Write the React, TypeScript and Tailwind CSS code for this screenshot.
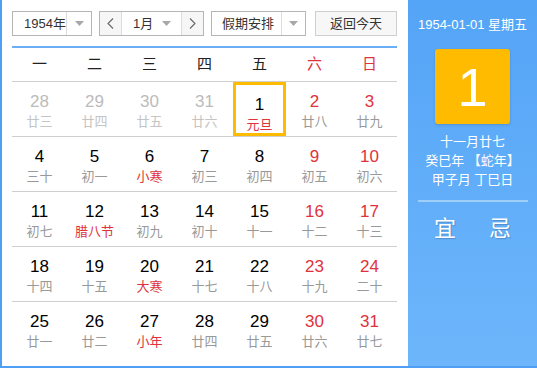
import React from "react";

type Cell = { d: number; l: string; kind: "prev" | "normal" | "weekend"; lr?: boolean; sel?: boolean };

const rows: Cell[][] = [
  [
    { d: 28, l: "廿三", kind: "prev" },
    { d: 29, l: "廿四", kind: "prev" },
    { d: 30, l: "廿五", kind: "prev" },
    { d: 31, l: "廿六", kind: "prev" },
    { d: 1, l: "元旦", kind: "normal", lr: true, sel: true },
    { d: 2, l: "廿八", kind: "weekend" },
    { d: 3, l: "廿九", kind: "weekend" },
  ],
  [
    { d: 4, l: "三十", kind: "normal" },
    { d: 5, l: "初一", kind: "normal" },
    { d: 6, l: "小寒", kind: "normal", lr: true },
    { d: 7, l: "初三", kind: "normal" },
    { d: 8, l: "初四", kind: "normal" },
    { d: 9, l: "初五", kind: "weekend" },
    { d: 10, l: "初六", kind: "weekend" },
  ],
  [
    { d: 11, l: "初七", kind: "normal" },
    { d: 12, l: "腊八节", kind: "normal", lr: true },
    { d: 13, l: "初九", kind: "normal" },
    { d: 14, l: "初十", kind: "normal" },
    { d: 15, l: "十一", kind: "normal" },
    { d: 16, l: "十二", kind: "weekend" },
    { d: 17, l: "十三", kind: "weekend" },
  ],
  [
    { d: 18, l: "十四", kind: "normal" },
    { d: 19, l: "十五", kind: "normal" },
    { d: 20, l: "大寒", kind: "normal", lr: true },
    { d: 21, l: "十七", kind: "normal" },
    { d: 22, l: "十八", kind: "normal" },
    { d: 23, l: "十九", kind: "weekend" },
    { d: 24, l: "二十", kind: "weekend" },
  ],
  [
    { d: 25, l: "廿一", kind: "normal" },
    { d: 26, l: "廿二", kind: "normal" },
    { d: 27, l: "小年", kind: "normal", lr: true },
    { d: 28, l: "廿四", kind: "normal" },
    { d: 29, l: "廿五", kind: "normal" },
    { d: 30, l: "廿六", kind: "weekend" },
    { d: 31, l: "廿七", kind: "weekend" },
  ],
];

const weekdays = ["一", "二", "三", "四", "五", "六", "日"];

const cjk = { fontFamily: '"Liberation Sans", "Noto Sans CJK SC", sans-serif' };

function Caret() {
  return (
    <svg width="9" height="5" viewBox="0 0 9 5">
      <path d="M0 0 L9 0 L4.5 5 Z" fill="#a8a8a8" />
    </svg>
  );
}

export default function App() {
  return (
    <div className="w-[537px] h-[368px] flex bg-white border-l-2 border-b-2 border-[#4f9ff6]" style={cjk}>
      <div className="w-[406px] pl-[10px] pr-[11px] pt-[11px] flex flex-col">
        <div className="flex h-[25px] text-[13px] text-[#333]">
          <div className="w-[80px] flex border border-[#b5b5b5] bg-white">
            <div className="flex-1 flex items-center pl-[11px]">1954年</div>
            <div className="w-[25px] border-l border-[#dcdcdc] flex items-center justify-center">
              <Caret />
            </div>
          </div>
          <div className="ml-[7px] w-[105px] flex border border-[#b5b5b5]">
            <div className="w-[22px] bg-[#f6f6f6] border-r border-[#dcdcdc] flex items-center justify-center">
              <svg width="7" height="11" viewBox="0 0 7 11"><path d="M6 0.5 L1 5.5 L6 10.5" stroke="#666" fill="none" strokeWidth="1.1" /></svg>
            </div>
            <div className="flex-1 flex items-center bg-white">
              <span className="pl-[11px] flex-1">1月</span>
              <span className="pr-[10px] flex items-center"><Caret /></span>
            </div>
            <div className="w-[22px] bg-[#f6f6f6] border-l border-[#dcdcdc] flex items-center justify-center">
              <svg width="7" height="11" viewBox="0 0 7 11"><path d="M1 0.5 L6 5.5 L1 10.5" stroke="#666" fill="none" strokeWidth="1.1" /></svg>
            </div>
          </div>
          <div className="ml-[7px] w-[95px] flex border border-[#b5b5b5] bg-white">
            <div className="flex-1 flex items-center pl-[10px]">假期安排</div>
            <div className="w-[24px] border-l border-[#dcdcdc] flex items-center justify-center">
              <Caret />
            </div>
          </div>
          <div className="ml-[9px] w-[82px] flex items-center justify-center border border-[#cfcfcf] bg-[#f7f7f7]">
            返回今天
          </div>
        </div>
        <div className="mt-[10px] h-[2px] bg-[#6aaef5]" />
        <div className="grid grid-cols-7 h-[33px] items-center text-[15px] text-[#222]">
          {weekdays.map((w, i) => (
            <div key={w} className={`text-center ${i >= 5 ? "text-[#e0323c]" : ""}`}>{w}</div>
          ))}
        </div>
        {rows.map((r, ri) => (
          <div key={ri} className="grid grid-cols-7 h-[55px] border-t border-[#cfcfcf]">
            {r.map((c, ci) => {
              const numColor = c.kind === "prev" ? "text-[#bbbbbb]" : c.kind === "weekend" ? "text-[#e0323c]" : "text-black";
              const lunColor = c.lr ? "text-[#e0323c]" : c.kind === "prev" ? "text-[#c4c4c4]" : "text-[#999999]";
              return (
                <div key={ci} className="flex justify-center">
                  <div
                    className={`w-[53px] h-[54px] flex flex-col items-center pt-[10px] ${c.sel ? "border-[3px] border-[#ffbb00] pt-[7px]" : ""}`}
                  >
                    <div className={`text-[17px] leading-[20px] ${numColor}`} style={{ fontFamily: '"Liberation Sans", Arial, sans-serif' }}>{c.d}</div>
                    <div className={`text-[13px] leading-[18px] mt-[1px] ${lunColor}`}>{c.l}</div>
                  </div>
                </div>
              );
            })}
          </div>
        ))}
      </div>
      <div className="flex-1 flex flex-col items-center bg-gradient-to-b from-[#54a4f7] to-[#6db6fb] text-white">
        <div className="mt-[16px] text-[13px] leading-[18px]">1954-01-01 星期五</div>
        <div className="mt-[15px] w-[75px] h-[75px] rounded-[3px] bg-[#ffbb00] flex items-center justify-center shadow-[0_1px_3px_rgba(0,0,0,0.15)]">
          <span className="text-[54px] leading-none" style={{ fontFamily: '"Liberation Sans", Arial, sans-serif' }}>1</span>
        </div>
        <div className="mt-[8px] text-[13px] leading-[19px] text-center">
          <div>十一月廿七</div>
          <div>癸巳年 【蛇年】</div>
          <div>甲子月 丁巳日</div>
        </div>
        <div className="mt-[11px] w-[110px] h-[2px] bg-white/40" />
        <div className="mt-[14px] flex gap-[33px] text-[22px] leading-[26px] [text-shadow:1px_1px_1px_rgba(0,0,0,0.2)]">
          <span>宜</span>
          <span>忌</span>
        </div>
      </div>
    </div>
  );
}
